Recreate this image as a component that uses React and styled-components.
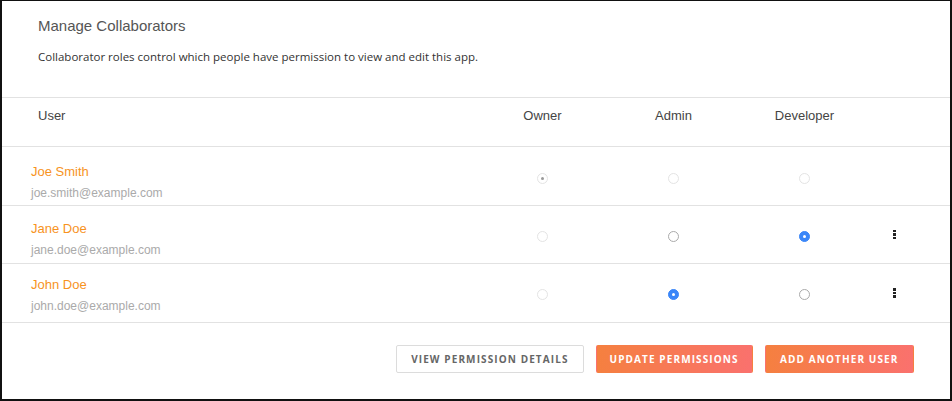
import styled, { createGlobalStyle } from "styled-components";

const GlobalStyle = createGlobalStyle`
    html, body {
        margin: 0;
        padding: 0;
        background: #fff;
    }
    * {
        box-sizing: border-box;
    }
`

const Frame = styled.div`
    width: 952px;
    height: 401px;
    border-top: 1px solid #111;
    border-left: 2px solid #111;
    border-right: 2px solid #111;
    border-bottom: 2px solid #111;
    background: #fff;
    display: flex;
    flex-direction: column;
    font-family: "Liberation Sans", Arial, sans-serif;
`

const Header = styled.div`
    padding: 15px 36px 0;
    height: 97px;
    border-bottom: 1px solid #e2e2e2;
`

const Titulo = styled.h1`
    margin: 0;
    font-size: 15px;
    font-weight: 400;
    color: #555;
    line-height: 20px;
`

const Descricao = styled.p`
    margin: 13px 0 0;
    font-family: "Open Sans", sans-serif;
    font-size: 11.5px;
    color: #333;
    line-height: 16px;
`

const Grade = styled.div`
    display: grid;
    grid-template-columns: 1fr 131px 131px 131px 48px;
    padding-right: 32px;
    align-items: center;
    border-bottom: 1px solid #e2e2e2;
    height: ${p => p.$altura}px;
`

const CabecalhoCelula = styled.div`
    font-size: 13px;
    color: #444;
    text-align: ${p => (p.$esquerda ? "left" : "center")};
    padding-left: ${p => (p.$esquerda ? "36px" : "0")};
    margin-top: -13px;
`

const UsuarioInfo = styled.div`
    padding-left: 29px;
    display: flex;
    flex-direction: column;
    gap: 5px;
    margin-top: ${p => p.$offset}px;
`

const Nome = styled.span`
    font-size: 13px;
    color: #f7931e;
    line-height: 17px;
`

const Email = styled.span`
    font-size: 12px;
    color: #aaa;
    line-height: 16px;
`

const Celula = styled.div`
    display: flex;
    justify-content: center;
    align-items: center;
    margin-top: ${p => p.$offset}px;
`

const Radio = styled.span`
    width: 11px;
    height: 11px;
    border-radius: 50%;
    border: 1px solid;
    background: ${p => (p.$marcado ? "#3a86f8" : "#fff")};
    border-color: ${p => (p.$marcado ? "#3a86f8" : p.$ativo ? "#aaaaaa" : "#e4e4e4")};
    display: flex;
    align-items: center;
    justify-content: center;

    &::after {
        content: "";
        width: 3px;
        height: 3px;
        border-radius: 50%;
        background: ${p => (p.$marcado ? "#fff" : p.$desabilitadoMarcado ? "#999" : "transparent")};
    }
`

const Kebab = styled.span`
    display: flex;
    flex-direction: column;
    gap: 1px;

    & > i {
        display: block;
        width: 3px;
        height: 2.5px;
        background: #222;
    }
`

const Rodape = styled.div`
    display: flex;
    justify-content: flex-end;
    gap: 12px;
    padding: 22px 36px 0 0;
`

const Botao = styled.button`
    height: 28px;
    padding: 0 ${p => p.$pad}px;
    font-family: "Open Sans", sans-serif;
    font-weight: 700;
    font-size: 10px;
    letter-spacing: 1.1px;
    text-transform: uppercase;
    border-radius: 2px;
    cursor: pointer;
    border: 1px solid ${p => (p.$primario ? "transparent" : "#dcdcdc")};
    color: ${p => (p.$primario ? "#fff" : "#666")};
    background: ${p => (p.$primario ? "linear-gradient(100deg, #f5803f, #fa716e)" : "#fff")};
`

const usuarios = [
    { nome: "Joe Smith", email: "joe.smith@example.com", papel: "owner", altura: 59, off: 11 },
    { nome: "Jane Doe", email: "jane.doe@example.com", papel: "developer", altura: 58, off: 9 },
    { nome: "John Doe", email: "john.doe@example.com", papel: "admin", altura: 59, off: 4 },
]

const papeis = ["owner", "admin", "developer"]

const LinhaUsuario = ({ u }) => {
    const dono = u.papel === "owner"
    return (
        <Grade $altura={u.altura}>
            <UsuarioInfo $offset={u.off}>
                <Nome>{u.nome}</Nome>
                <Email>{u.email}</Email>
            </UsuarioInfo>
            {papeis.map(p => (
                <Celula key={p} $offset={dono ? 4 : 3}>
                    {dono ? (
                        <Radio $desabilitadoMarcado={p === "owner"} />
                    ) : (
                        <Radio $marcado={u.papel === p} $ativo={p !== "owner"} />
                    )}
                </Celula>
            ))}
            <Celula $offset={0}>
                {!dono && (
                    <Kebab>
                        <i />
                        <i />
                        <i />
                    </Kebab>
                )}
            </Celula>
        </Grade>
    )
}

const App = () => {
    return (
        <>
            <GlobalStyle />
            <Frame>
                <Header>
                    <Titulo>Manage Collaborators</Titulo>
                    <Descricao>Collaborator roles control which people have permission to view and edit this app.</Descricao>
                </Header>
                <Grade $altura={49}>
                    <CabecalhoCelula $esquerda>User</CabecalhoCelula>
                    <CabecalhoCelula>Owner</CabecalhoCelula>
                    <CabecalhoCelula>Admin</CabecalhoCelula>
                    <CabecalhoCelula>Developer</CabecalhoCelula>
                    <div />
                </Grade>
                {usuarios.map(u => (
                    <LinhaUsuario key={u.email} u={u} />
                ))}
                <Rodape>
                    <Botao $pad={14}>View Permission Details</Botao>
                    <Botao $primario $pad={13}>Update Permissions</Botao>
                    <Botao $primario $pad={14.5}>Add Another User</Botao>
                </Rodape>
            </Frame>
        </>
    )
}

export default App
